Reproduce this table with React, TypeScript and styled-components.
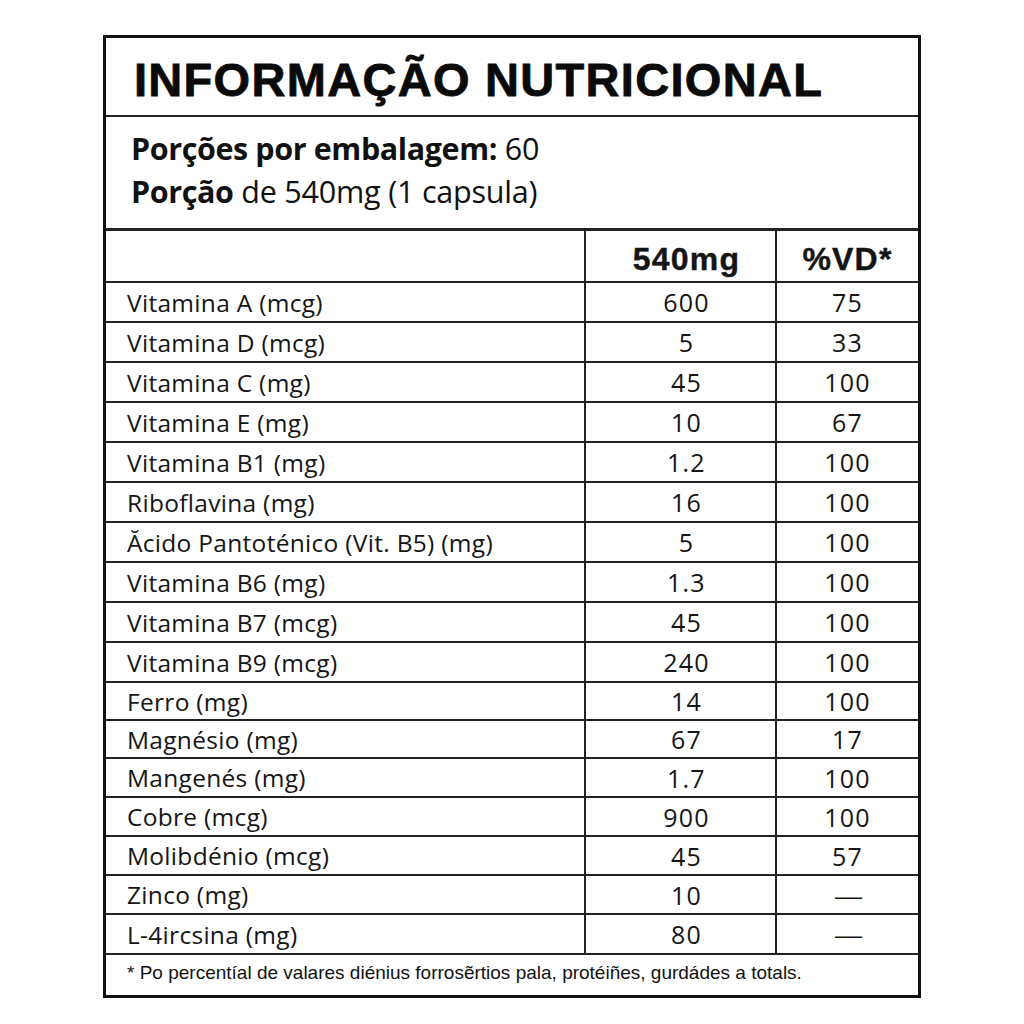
import React from "react";
import styled, { createGlobalStyle } from "styled-components";

const Global = createGlobalStyle`
  html, body { margin: 0; padding: 0; background: #fff; }
  body { width: 1024px; height: 1024px; font-family: "Open Sans", "Noto Sans", sans-serif; color: #111; }
`;

const Page = styled.div`
  width: 1024px;
  height: 1024px;
  padding: 35px 0 0 103px;
  box-sizing: border-box;
`;

const Label = styled.div`
  width: 818px;
  height: 963px;
  box-sizing: border-box;
  border: 3px solid #111;
  display: flex;
  flex-direction: column;
`;

const TitleBar = styled.div`
  height: 79px;
  box-sizing: border-box;
  border-bottom: 2px solid #222;
  padding: 6px 0 0 28px;
  display: flex;
  align-items: center;
`;

const Title = styled.h1`
  margin: 0;
  font-family: "Liberation Sans", "Arial", sans-serif;
  font-weight: 700;
  font-size: 47px;
  letter-spacing: 1.3px;
  line-height: 1;
  color: #0a0a0a;
  -webkit-text-stroke: 0.8px #0a0a0a;
`;

const Servings = styled.div`
  height: 114px;
  box-sizing: border-box;
  border-bottom: 3px solid #222;
  padding: 12px 0 0 25px;
  display: flex;
  flex-direction: column;
  gap: 4px;
`;

const ServLine = styled.div`
  font-family: "Open Sans", "Noto Sans", sans-serif;
  font-size: 30.5px;
  line-height: 39px;
  color: #111;
  letter-spacing: -0.2px;
  b { font-weight: 700; letter-spacing: -0.4px; }
`;

const Table = styled.div`
  display: grid;
  grid-template-columns: 480px 191px 1fr;
`;

const Cell = styled.div<{ $align?: "left" | "center"; $last?: boolean; $h: number }>`
  height: ${(p) => p.$h}px;
  box-sizing: border-box;
  border-bottom: 2px solid #222;
  border-right: ${(p) => (p.$last ? "none" : "2px solid #222")};
  display: flex;
  align-items: center;
  justify-content: ${(p) => (p.$align === "center" ? "center" : "flex-start")};
  padding-left: ${(p) => (p.$align !== "center" ? "21px" : p.$last ? "0" : "12px")};
  font-family: "Open Sans", "Noto Sans", sans-serif;
  font-weight: 400;
  font-size: ${(p) => (p.$align === "center" ? "25px" : "24.5px")};
  letter-spacing: ${(p) => (p.$align === "center" ? "1.2px" : "0.3px")};
  color: #151515;
`;

const HeadCell = styled(Cell)`
  font-family: "Liberation Sans", "Arial", sans-serif;
  font-weight: 700;
  font-size: 32px;
  letter-spacing: 1.2px;
  padding-top: 6px;
  -webkit-text-stroke: 0.4px #111;
`;

const Dash = styled.span`
  letter-spacing: -2px;
  font-size: 22px;
`;

const Footer = styled.div`
  flex: 1;
  display: flex;
  align-items: center;
  padding: 0 0 4px 21px;
  font-family: "Liberation Sans", "Arial", sans-serif;
  font-size: 19px;
  color: #111;
`;

type Row = [string, string, string, number];
const rows: Row[] = [
  ["Vitamina A (mcg)", "600", "75", 40],
  ["Vitamina D (mcg)", "5", "33", 40],
  ["Vitamina C (mg)", "45", "100", 40],
  ["Vitamina E (mg)", "10", "67", 40],
  ["Vitamina B1 (mg)", "1.2", "100", 40],
  ["Riboflavina (mg)", "16", "100", 40],
  ["Ăcido Pantoténico (Vit. B5) (mg)", "5", "100", 40],
  ["Vitamina B6 (mg)", "1.3", "100", 40],
  ["Vitamina B7 (mcg)", "45", "100", 40],
  ["Vitamina B9 (mcg)", "240", "100", 40],
  ["Ferro (mg)", "14", "100", 38],
  ["Magnésio (mg)", "67", "17", 38],
  ["Mangenés (mg)", "1.7", "100", 39],
  ["Cobre (mcg)", "900", "100", 39],
  ["Molibdénio (mcg)", "45", "57", 39],
  ["Zinco (mg)", "10", "---", 39],
  ["L-4ircsina (mg)", "80", "---", 40],
];

export default function App() {
  return (
    <>
      <Global />
      <Page>
        <Label>
          <TitleBar>
            <Title>INFORMAÇÃO NUTRICIONAL</Title>
          </TitleBar>
          <Servings>
            <ServLine>
              <b>Porções por embalagem:</b> 60
            </ServLine>
            <ServLine>
              <b>Porção</b> de 540mg (1 capsula)
            </ServLine>
          </Servings>
          <Table>
            <Cell $h={52} />
            <HeadCell $h={52} $align="center">540mg</HeadCell>
            <HeadCell $h={52} $align="center" $last>%VD*</HeadCell>
            {rows.map(([n, a, v, h]) => (
              <React.Fragment key={n}>
                <Cell $h={h}>{n}</Cell>
                <Cell $h={h} $align="center">{a}</Cell>
                <Cell $h={h} $align="center" $last>
                  {v === "---" ? <Dash>–––</Dash> : v}
                </Cell>
              </React.Fragment>
            ))}
          </Table>
          <Footer>* Po percentíal de valares diénius forrosẽrtios pala, protéiñes, gurdádes a totals.</Footer>
        </Label>
      </Page>
    </>
  );
}
